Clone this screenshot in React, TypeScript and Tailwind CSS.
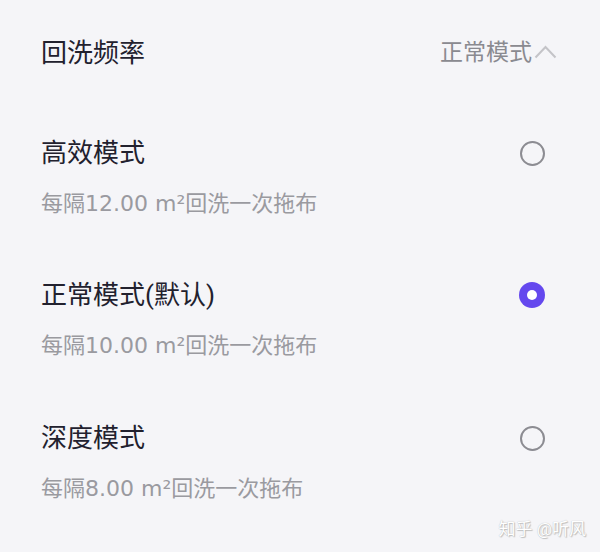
import React from "react";

const font = { fontFamily: 'Roboto, "Noto Sans CJK SC", "Noto Sans", sans-serif' };
const subFont = { fontFamily: '"DejaVu Sans", "Noto Sans CJK SC", sans-serif' };

function Radio({ checked }: { checked: boolean }) {
  if (checked) {
    return (
      <div className="flex h-[26px] w-[26px] items-center justify-center rounded-full bg-[#6448ee]">
        <div className="h-[10px] w-[10px] rounded-full bg-white" />
      </div>
    );
  }
  return <div className="h-[25px] w-[25px] rounded-full border-[2.5px] border-[#8c8c92]" />;
}

const rows = [
  { title: "高效模式", n: "12.00", checked: false },
  { title: "正常模式(默认)", n: "10.00", checked: true },
  { title: "深度模式", n: "8.00", checked: false },
];

export default function App() {
  return (
    <div className="relative h-[552px] w-[600px] overflow-hidden bg-[#f5f5f8]" style={font}>
      <div className="flex h-[106px] items-center justify-between pl-[41px] pr-[43px]">
        <span className="text-[26px] leading-[34px] text-[#22212e]">回洗频率</span>
        <div className="flex items-center">
          <span className="text-[23px] leading-[30px] text-[#8a8a90]">正常模式</span>
          <svg width="23" height="14" viewBox="0 0 23 14" className="ml-[2px] mb-[2px]">
            <path d="M1.5 12.5 L11.5 2 L21.5 12.5" fill="none" stroke="#c4c4c8" strokeWidth="2" />
          </svg>
        </div>
      </div>
      {rows.map((r, i) => (
        <div key={i} className={i === 0 ? "h-[142px]" : "h-[143px]"}>
          <div className="flex items-center justify-between pl-[41px] pr-[55px] pt-[30px]">
            <span className="text-[26px] leading-[34px] text-[#22212e]">{r.title}</span>
            <Radio checked={r.checked} />
          </div>
          <div className="mt-[19px] pl-[41px] text-[22px] leading-[30px] text-[#9a9aa0]" style={subFont}>
            每隔{r.n} m²回洗一次拖布
          </div>
        </div>
      ))}
      <div
        className="absolute right-[14px] bottom-[12px] text-[17px] leading-[22px] text-white"
        style={{ textShadow: "0 0 1px #b0b0b0, 1px 1px 1px #c0c0c0" }}
      >
        知乎 @听风
      </div>
    </div>
  );
}
